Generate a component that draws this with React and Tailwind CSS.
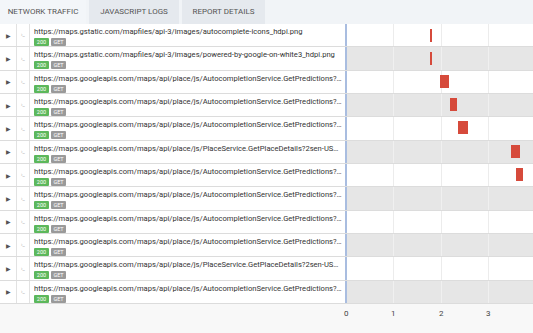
import React from "react";

const rows = [
  { url: "https://maps.gstatic.com/mapfiles/api-3/images/autocomplete-icons_hdpi.png", bar: [430, 2] },
  { url: "https://maps.gstatic.com/mapfiles/api-3/images/powered-by-google-on-white3_hdpi.png", bar: [430, 2] },
  { url: "https://maps.googleapis.com/maps/api/place/js/AutocompletionService.GetPredictions?1m6&1sbarb&4sen-US", bar: [440, 9] },
  { url: "https://maps.googleapis.com/maps/api/place/js/AutocompletionService.GetPredictions?1m6&1sbarc&4sen-US", bar: [450, 7] },
  { url: "https://maps.googleapis.com/maps/api/place/js/AutocompletionService.GetPredictions?1m6&1sbard&4sen-US", bar: [458, 10] },
  { url: "https://maps.googleapis.com/maps/api/place/js/PlaceService.GetPlaceDetails?2sen-US&10e3&14m1&1s", bar: [511, 9] },
  { url: "https://maps.googleapis.com/maps/api/place/js/AutocompletionService.GetPredictions?1m6&1sbare&4sen-US", bar: [516, 7] },
  { url: "https://maps.googleapis.com/maps/api/place/js/AutocompletionService.GetPredictions?1m6&1sbarf&4sen-US" },
  { url: "https://maps.googleapis.com/maps/api/place/js/AutocompletionService.GetPredictions?1m6&1sbarg&4sen-US" },
  { url: "https://maps.googleapis.com/maps/api/place/js/AutocompletionService.GetPredictions?1m6&1sbarh&4sen-US" },
  { url: "https://maps.googleapis.com/maps/api/place/js/PlaceService.GetPlaceDetails?2sen-US&10e3&14m1&1s" },
  { url: "https://maps.googleapis.com/maps/api/place/js/AutocompletionService.GetPredictions?1m6&1sbari&4sen-US" },
];

function Row({ row, i }) {
  const gray = i % 2 === 1;
  const big = row.bar && row.bar[1] > 3;
  const line = gray ? "border-[#f0f0f0]" : "border-[#ececec]";
  return (
    <div className="flex h-[23.33px] border-b border-[#dcdcdc] bg-white">
      <div className="w-[17px] shrink-0 flex items-center justify-center border-r border-[#e2e2e2] text-[6px] text-[#555]">
        ▶
      </div>
      <div className="w-[13px] shrink-0 flex items-center justify-center border-r border-[#e2e2e2] text-[5px] text-[#aaa]">
        ›_
      </div>
      <div className="w-[315px] shrink-0 pl-[4px] pr-[3px] pt-[2px] min-w-0">
        <div className="truncate text-[7.6px] leading-[11px] text-[#333]">{row.url}</div>
        <div className="flex gap-[2px] mt-[1px]">
          <span className="h-[8px] w-[15px] text-center bg-[#5cb85c] text-white text-[5.5px] leading-[8px] rounded-[1px]">200</span>
          <span className="h-[8px] w-[15px] text-center bg-[#9a9a9a] text-white text-[5.5px] leading-[8px] rounded-[1px]">GET</span>
        </div>
      </div>
      <div className={`relative flex-1 flex border-l-2 border-[#a9bde0] ${gray ? "bg-[#e6e6e6]" : "bg-white"}`}>
        <div className={`w-[47px] border-r ${line}`} />
        <div className={`w-[48px] border-r ${line}`} />
        <div className={`w-[47px] border-r ${line}`} />
        {row.bar && (
          <div
            className={`absolute bg-[#d64a3b] ${big ? "top-[4px] h-[13px]" : "top-[5px] h-[13px]"}`}
            style={{ left: row.bar[0] - 347, width: row.bar[1] }}
          />
        )}
      </div>
    </div>
  );
}

export default function App() {
  return (
    <div className="w-[533px] h-[333px] bg-[#f8f8f8] overflow-hidden font-['Roboto','Liberation_Sans',sans-serif]">
      <div className="flex h-[24px] bg-[#f1f4f7] gap-[3px] text-[8px] text-[#555] uppercase">
        <div className="w-[86px] flex items-center justify-center bg-[#f3f6f9]">Network Traffic</div>
        <div className="w-[90px] flex items-center justify-center bg-[#e5e9ee]">JavaScript Logs</div>
        <div className="w-[83px] flex items-center justify-center bg-[#e5e9ee]">Report Details</div>
      </div>
      <div className="bg-white">
        {rows.map((r, i) => (
          <Row key={i} row={r} i={i} />
        ))}
      </div>
      <div className="flex pl-[344px] pt-[4px] text-[8px] text-[#444]">
        <span className="w-[47px]">0</span>
        <span className="w-[48px]">1</span>
        <span className="w-[47px]">2</span>
        <span>3</span>
      </div>
    </div>
  );
}
